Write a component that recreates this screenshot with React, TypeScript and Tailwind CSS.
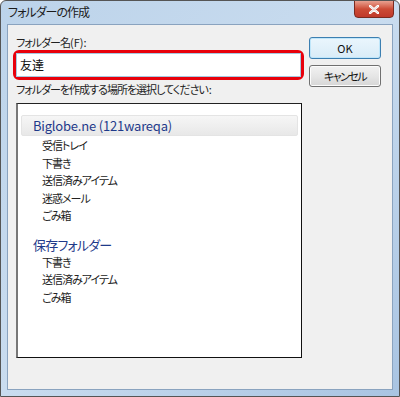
import React from "react";

const jp = { fontFamily: '"Noto Sans CJK JP", "Noto Sans", sans-serif' };

function TreeHeader({ label }: { label: string }) {
  return (
    <div className="mx-[3px] flex h-[21px] items-center rounded-[2px] border border-[#e4e4e4] bg-gradient-to-b from-[#f6f6f6] to-[#e8e8e8] pl-[11px] text-[13px] tracking-[-0.2px] text-[#1f3a8a]">
      {label}
    </div>
  );
}

function TreeItem({ label }: { label: string }) {
  return (
    <div className="h-[17.5px] pl-[24px] text-[11px] leading-[17.5px] tracking-[-1px] text-[#222]">{label}</div>
  );
}

export default function App() {
  return (
    <div
      className="flex h-[397px] w-[400px] flex-col overflow-hidden rounded-t-[6px] border border-[#555] bg-gradient-to-br from-[#bcd3ea] via-[#c9dcef] to-[#a9c4e2] [font-feature-settings:'palt']"
      style={jp}
    >
      <div className="relative flex h-[23px] items-center pb-[1px] pl-[7px] text-[12px] tracking-[-1px] text-[#1a1a1a]">
        フォルダーの作成
        <div className="absolute right-[5px] top-[-1px] flex h-[18px] w-[40px] items-center justify-center rounded-b-[4px] border border-[#7a2a20] bg-gradient-to-b from-[#e8a090] via-[#cc4b36] to-[#c0392b] text-[12px] font-bold text-white">
          <svg width="10" height="9" viewBox="0 0 10 9">
            <path d="M1 1 L9 8 M9 1 L1 8" stroke="#fff" strokeWidth="2.4" strokeLinecap="round" />
            <path d="M1 1 L9 8 M9 1 L1 8" stroke="#5a1a10" strokeWidth="0.6" strokeOpacity="0.3" />
          </svg>
        </div>
      </div>
      <div className="mx-[6px] mb-[6px] flex flex-1 border border-[#8aa3bf] bg-[#f0f0f0] pr-[11px] pl-[8px] pt-[10px]">
        <div className="flex w-[286px] flex-col">
          <div className="h-[15px] text-[11px] leading-[15px] tracking-[-1px] text-[#222]">
            フォルダー名<span className="tracking-normal">(F):</span>
          </div>
          <div className="ml-[-3px] w-[291px] rounded-[6px] border-[3px] border-[#e8000b]">
            <div className="flex h-[24px] items-center border border-[#a6c8e0] bg-white pl-[3px] text-[12px] text-[#111]">
              友達
            </div>
          </div>
          <div className="mt-[1px] h-[17px] text-[11px] leading-[17px] tracking-[-1px] text-[#222]">
            フォルダーを作成する場所を選択してください<span className="pl-[1px] tracking-normal">:</span>
          </div>
          <div className="mt-[5px] h-[255px] border-t border-r border-b border-l-2 border-t-[#222] border-r-[#111] border-b-[#111] border-l-[#777] bg-white pt-[11px]">
            <TreeHeader label="Biglobe.ne (121wareqa)" />
            <div className="pt-[1px]">
              <TreeItem label="受信トレイ" />
              <TreeItem label="下書き" />
              <TreeItem label="送信済みアイテム" />
              <TreeItem label="迷惑メール" />
              <TreeItem label="ごみ箱" />
            </div>
            <div className="mt-[11px] h-[18px] pl-[15px] text-[13px] leading-[18px] tracking-[-0.8px] text-[#1f3a8a]">
              保存フォルダー
            </div>
            <TreeItem label="下書き" />
            <TreeItem label="送信済みアイテム" />
            <TreeItem label="ごみ箱" />
          </div>
        </div>
        <div className="ml-auto flex flex-col gap-[6px] pt-[2px]">
          <button className="flex h-[22px] w-[72px] items-center justify-center rounded-[3px] border border-[#3c7fb1] bg-gradient-to-b from-[#eaf6fd] to-[#d9ecf7] text-[11px] text-[#111] shadow-[inset_0_0_0_1px_#bfe6fa]">
            OK
          </button>
          <button className="flex h-[22px] w-[72px] items-center justify-center rounded-[3px] border border-[#707070] bg-gradient-to-b from-[#f2f2f2] via-[#e6e6e6] to-[#d6d6d6] text-[11px] tracking-[-1.5px] text-[#111] shadow-[inset_0_0_0_1px_#fcfcfc]">
            キャンセル
          </button>
        </div>
      </div>
    </div>
  );
}
